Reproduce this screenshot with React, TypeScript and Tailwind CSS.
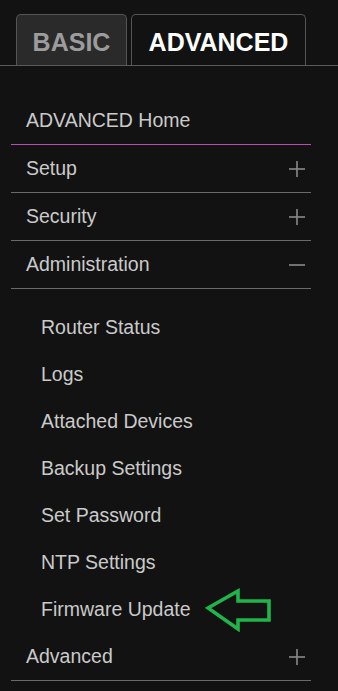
import React from 'react';

type Item = { label: string; toggle?: 'plus' | 'minus'; accent?: boolean };

const topItems: Item[] = [
  { label: 'ADVANCED Home', accent: true },
  { label: 'Setup', toggle: 'plus' },
  { label: 'Security', toggle: 'plus' },
  { label: 'Administration', toggle: 'minus' },
];

const subItems = [
  'Router Status',
  'Logs',
  'Attached Devices',
  'Backup Settings',
  'Set Password',
  'NTP Settings',
  'Firmware Update',
];

function Toggle({ kind }: { kind: 'plus' | 'minus' }) {
  return (
    <svg width="18" height="18" viewBox="0 0 18 18" className="mr-[5px]">
      <line x1="1" y1="9" x2="17" y2="9" stroke="#8a8a8a" strokeWidth="1.6" />
      {kind === 'plus' && <line x1="9" y1="1" x2="9" y2="17" stroke="#8a8a8a" strokeWidth="1.6" />}
    </svg>
  );
}

function Row({ item }: { item: Item }) {
  return (
    <div
      className={`flex h-[48px] items-center justify-between border-b pl-[15px] ${
        item.accent ? 'border-[#b54fb5]' : 'border-[#6a6a6a]'
      }`}
    >
      <span>{item.label}</span>
      {item.toggle && <Toggle kind={item.toggle} />}
    </div>
  );
}

function GreenArrow() {
  return (
    <svg width="70" height="44" viewBox="0 0 70 44" className="ml-[14px]">
      <polygon
        points="3,20 33,3 33,13 64,13 64,32 33,32 33,41"
        fill="none"
        stroke="#1fb54a"
        strokeWidth="3.6"
        strokeLinejoin="miter"
      />
    </svg>
  );
}

export default function App() {
  return (
    <div className="min-h-[691px] w-[338px] bg-[#121212] text-[19.5px] text-[#cacaca]" style={{ fontFamily: '"Liberation Sans", Arial, sans-serif' }}>
      {/* Tabs */}
      <div className="flex items-end gap-[4px] border-b border-[#5a5a5a] pl-4 pt-[14px]">
        <div className="flex h-[51px] w-[111px] items-center justify-center rounded-t-[5px] border border-b-0 border-[#555] bg-[#2a2a2a] pt-[5px] text-[25px] font-bold text-[#9c9c9c]">
          BASIC
        </div>
        <div className="flex h-[51px] w-[175px] items-center justify-center rounded-t-[5px] border border-b-0 border-[#555] bg-[#121212] pt-[5px] text-[25px] font-bold text-white">
          ADVANCED
        </div>
      </div>

      {/* Menu */}
      <div className="ml-[11px] mt-[31px] w-[300px]">
        {topItems.map((item) => (
          <Row key={item.label} item={item} />
        ))}
        <div className="pt-[15px]">
          {subItems.map((label) => (
            <div key={label} className="flex h-[47px] items-center pl-[30px]">
              <span>{label}</span>
              {label === 'Firmware Update' && <GreenArrow />}
            </div>
          ))}
        </div>
        <Row item={{ label: 'Advanced', toggle: 'plus' }} />
      </div>
    </div>
  );
}
